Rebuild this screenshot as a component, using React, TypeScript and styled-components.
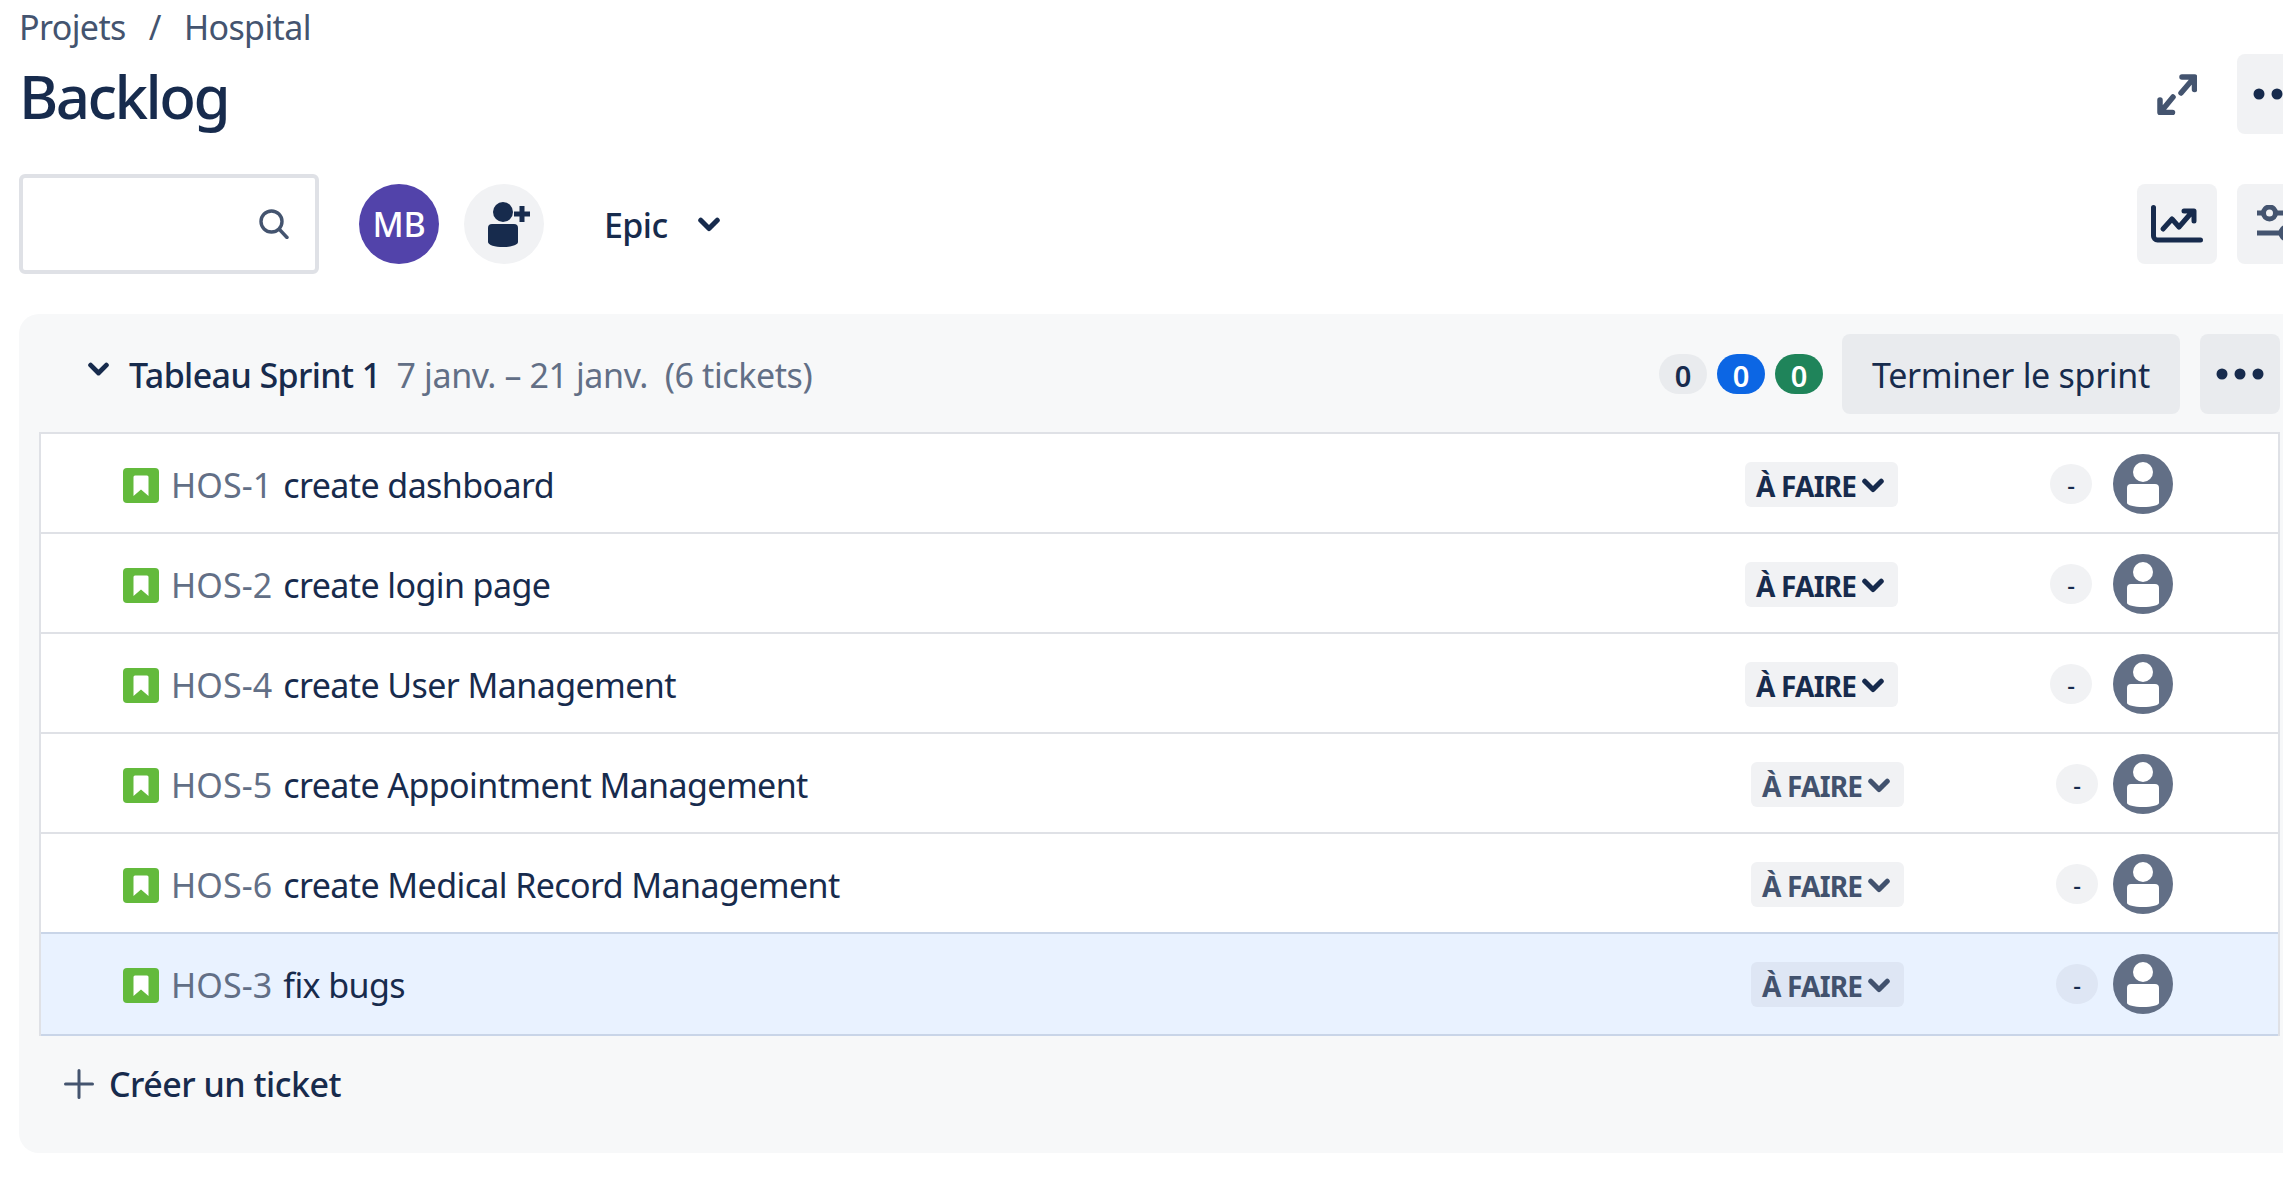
import React from 'react';
import styled, { createGlobalStyle } from 'styled-components';

const GlobalStyle = createGlobalStyle`
  html, body {
    margin: 0;
    padding: 0;
    background: #fff;
    overflow: hidden;
  }
  * { box-sizing: border-box; }
`;

const Page = styled.div`
  width: 2283px;
  height: 1198px;
  overflow: hidden;
  padding-left: 19px;
  font-family: 'Noto Sans', 'Open Sans', sans-serif;
  color: #172b4d;
`;

const Inner = styled.div`
  width: 2298px;
`;

const Header = styled.header`
  display: flex;
  justify-content: space-between;
  align-items: flex-end;
  padding-top: 7px;
`;

const Breadcrumb = styled.nav`
  display: flex;
  height: 40px;
  line-height: 40px;
  font-size: 34px;
  letter-spacing: -0.6px;
  color: #44546f;
  margin-bottom: 7px;
`;

const Slash = styled.span`
  margin: 0 23px;
`;

const Title = styled.h1`
  margin: 0;
  height: 80px;
  line-height: 84px;
  font-size: 60px;
  font-weight: 500;
  letter-spacing: -2.5px;
`;

const Actions = styled.div<{ $gap?: number }>`
  display: flex;
  align-items: center;
  gap: ${({ $gap }) => $gap ?? 20}px;
`;

const GhostIcon = styled.div`
  width: 60px;
  height: 80px;
  display: flex;
  align-items: center;
  justify-content: center;
`;

const IconButton = styled.button`
  width: 80px;
  height: 80px;
  padding: 0;
  border: none;
  border-radius: 8px;
  background: ${({ $bg }: { $bg?: string }) => $bg || '#f1f2f4'};
  display: flex;
  align-items: center;
  justify-content: center;
  flex-shrink: 0;
`;

const Toolbar = styled.div`
  display: flex;
  align-items: center;
  height: 100px;
  margin-top: 40px;
`;

const SearchBox = styled.div`
  width: 300px;
  height: 100px;
  border: 4px solid #dfe1e6;
  border-radius: 6px;
  display: flex;
  align-items: center;
  justify-content: flex-end;
  padding-right: 26px;
`;

const UserAvatar = styled.div`
  width: 80px;
  height: 80px;
  border-radius: 50%;
  background: #5243aa;
  color: #fff;
  font-size: 34px;
  font-weight: 500;
  letter-spacing: -0.3px;
  display: flex;
  align-items: center;
  justify-content: center;
  margin-left: 40px;
`;

const AddUser = styled.div`
  width: 80px;
  height: 80px;
  border-radius: 50%;
  background: #f1f2f4;
  margin-left: 25px;
`;

const EpicFilter = styled.div`
  display: flex;
  align-items: center;
  gap: 30px;
  margin-left: 60px;
  padding-top: 2px;
  font-size: 34px;
  font-weight: 500;
  letter-spacing: -0.6px;
`;

const ToolbarEnd = styled(Actions)`
  margin-left: auto;
`;

const FilterIcon = styled.svg`
  width: 46px;
  height: 38px;
  margin-left: 6px;
  flex-shrink: 0;
`;

const Panel = styled.section`
  margin-top: 40px;
  height: 839px;
  background: #f7f8f9;
  border-radius: 20px;
  padding: 0 37px 0 20px;
`;

const SprintHeader = styled.div`
  display: flex;
  align-items: center;
  height: 118px;
  padding: 2px 0 0 49px;
`;

const SprintChevron = styled.span`
  display: flex;
  margin-top: -10px;
  margin-right: 20px;
`;

const SprintTitle = styled.span`
  padding-top: 2px;
  font-size: 34px;
  font-weight: 500;
  letter-spacing: -0.6px;
`;

const SprintMeta = styled.span`
  padding-top: 2px;
  font-size: 34px;
  color: #626f86;
  letter-spacing: -0.4px;
  margin-left: 16px;
  white-space: pre;
`;

const SprintActions = styled.div`
  display: flex;
  align-items: center;
  margin-left: auto;
`;

const Counter = styled.span<{ $bg: string; $fg: string; $gap: number }>`
  width: 48px;
  height: 40px;
  padding-top: 2px;
  border-radius: 20px;
  background: ${({ $bg }) => $bg};
  color: ${({ $fg }) => $fg};
  font-size: 29px;
  font-weight: 600;
  display: flex;
  align-items: center;
  justify-content: center;
  margin-right: ${({ $gap }) => $gap}px;
`;

const EndSprint = styled.button`
  width: 338px;
  height: 80px;
  padding: 2px 0 0;
  border: none;
  border-radius: 8px;
  background: #e9ebee;
  color: #172b4d;
  font-family: inherit;
  font-size: 34px;
  letter-spacing: -0.3px;
  margin-right: 20px;
`;

const Table = styled.div`
  border-top: 2px solid #dfe1e6;
  border-left: 2px solid #dfe1e6;
  border-right: 2px solid #dfe1e6;
`;

const Row = styled.div<{ $selected?: boolean; $beforeSelected?: boolean }>`
  display: flex;
  align-items: center;
  height: ${({ $selected }) => ($selected ? 102 : 100)}px;
  padding: ${({ $selected }) => ($selected ? '0' : '2px')} 105px 0 82px;
  background: ${({ $selected }) => ($selected ? '#e9f2ff' : '#fff')};
  border-bottom: 2px solid
    ${({ $selected, $beforeSelected }) => ($selected || $beforeSelected ? '#c9d5e8' : '#dfe1e6')};
`;

const StoryIcon = styled.svg`
  width: 36px;
  height: 35px;
  flex-shrink: 0;
  margin: 3px 12px 0 0;
`;

const IssueKey = styled.span`
  padding-top: 2px;
  font-size: 34px;
  color: #626f86;
  letter-spacing: 0.1px;
  margin-right: 11px;
`;

const Summary = styled.span`
  padding-top: 2px;
  font-size: 34px;
  letter-spacing: -0.6px;
`;

const StatusPill = styled.div<{ $selected?: boolean; $dark?: boolean }>`
  display: flex;
  align-items: center;
  height: 45px;
  width: 153px;
  padding: 3px 0 0 11px;
  margin-left: auto;
  border-radius: 6px;
  background: ${({ $selected }) => ($selected ? '#dee6f4' : '#f1f2f4')};
  color: ${({ $dark }) => ($dark ? '#172b4d' : '#42526e')};
  font-size: 28px;
  font-weight: 700;
  letter-spacing: -0.8px;
  gap: 6px;
`;

const Estimate = styled.div<{ $selected?: boolean }>`
  width: 42px;
  height: 40px;
  border-radius: 50%;
  background: ${({ $selected }) => ($selected ? '#dee6f4' : '#f1f2f4')};
  margin-left: 152px;
  font-size: 24px;
  font-weight: 500;
  display: flex;
  align-items: center;
  justify-content: center;
`;

const Assignee = styled.svg<{ $gap: number }>`
  width: 60px;
  height: 60px;
  flex-shrink: 0;
  margin-left: ${({ $gap }) => $gap}px;
`;

const CreateRow = styled.div`
  display: flex;
  align-items: center;
  gap: 15px;
  height: 96px;
  padding: 0 0 0 25px;
  font-size: 34px;
  font-weight: 500;
  letter-spacing: -0.5px;
`;

const Chevron = ({ color = '#172b4d', size = 22 }: { color?: string; size?: number }) => (
  <svg width={size} height={size * 0.7} viewBox="0 0 20 14" fill="none">
    <path d="M2.5 3 10 10.5 17.5 3" stroke={color} strokeWidth="4.6" strokeLinecap="round" strokeLinejoin="round" />
  </svg>
);

const Dots = () => (
  <svg width="48" height="12" viewBox="0 0 48 12" fill="#172b4d">
    <circle cx="6" cy="6" r="5.5" />
    <circle cx="24" cy="6" r="5.5" />
    <circle cx="42" cy="6" r="5.5" />
  </svg>
);

const tickets = [
  { key: 'HOS-1', summary: 'create dashboard', dark: true },
  { key: 'HOS-2', summary: 'create login page', dark: true },
  { key: 'HOS-4', summary: 'create User Management', dark: true },
  { key: 'HOS-5', summary: 'create Appointment Management' },
  { key: 'HOS-6', summary: 'create Medical Record Management', beforeSelected: true },
  { key: 'HOS-3', summary: 'fix bugs', selected: true }
];

const App: React.FC = () => (
  <Page>
    <GlobalStyle />
    <Inner>
      <Header>
        <div>
          <Breadcrumb>
            <span>Projets</span>
            <Slash>/</Slash>
            <span>Hospital</span>
          </Breadcrumb>
          <Title>Backlog</Title>
        </div>
        <Actions $gap={30}>
          <GhostIcon>
            <svg width="40" height="41" viewBox="0 0 40 41" fill="none" stroke="#44546f" strokeWidth="5.5" strokeLinecap="round" strokeLinejoin="round">
              <path d="M25 3h12.5v12.5M36 5 24 19M3 26v12.5h12.5M4.5 37 16 23" />
            </svg>
          </GhostIcon>
          <IconButton>
            <Dots />
          </IconButton>
        </Actions>
      </Header>

      <Toolbar>
        <SearchBox>
          <svg width="30" height="30" viewBox="0 0 30 30" fill="none" stroke="#44546f" strokeWidth="3.4" strokeLinecap="round">
            <circle cx="12.5" cy="12.5" r="10.5" />
            <path d="M20.5 20.5 28 28.5" />
          </svg>
        </SearchBox>
        <UserAvatar>MB</UserAvatar>
        <AddUser>
          <svg width="80" height="80" viewBox="0 0 80 80" fill="#172b4d">
            <ellipse cx="39" cy="28" rx="10" ry="10" />
            <path d="M24 44a4 4 0 0 1 4-4h22a4 4 0 0 1 4 4v14c0 3-7 5-15 5s-15-2-15-5z" />
            <path d="M55.5 22h5v5.5h5.5v5h-5.5v5.5h-5v-5.5h-5.5v-5h5.500z" />
          </svg>
        </AddUser>
        <EpicFilter>
          Epic
          <Chevron />
        </EpicFilter>
        <ToolbarEnd>
          <IconButton>
            <svg width="52" height="38" viewBox="0 0 52 38" fill="none" stroke="#172b4d" strokeLinecap="round" strokeLinejoin="round">
              <path d="M2.5 2.5v28.5a4 4 0 0 0 4 4h43" strokeWidth="5" />
              <path d="M12 24l9-10 7 8 13-15M33 6h10v10" strokeWidth="5" />
            </svg>
          </IconButton>
          <IconButton>
            <FilterIcon viewBox="0 0 46 38" fill="none" stroke="#44546f" strokeWidth="5">
              <path d="M0 8h5M20 8h26M0 28h22M38 28h8" />
              <circle cx="12.5" cy="8" r="6" />
              <circle cx="30" cy="28" r="6" />
            </FilterIcon>
          </IconButton>
        </ToolbarEnd>
      </Toolbar>

      <Panel>
        <SprintHeader>
          <SprintChevron>
            <Chevron size={21} />
          </SprintChevron>
          <SprintTitle>Tableau Sprint 1</SprintTitle>
          <SprintMeta>7 janv. – 21 janv.  (6 tickets)</SprintMeta>
          <SprintActions>
            <Counter $bg="#e9ebee" $fg="#172b4d" $gap={10}>0</Counter>
            <Counter $bg="#0c66e4" $fg="#fff" $gap={10}>0</Counter>
            <Counter $bg="#1f845a" $fg="#fff" $gap={19}>0</Counter>
            <EndSprint>Terminer le sprint</EndSprint>
            <IconButton $bg="#e9ebee">
              <Dots />
            </IconButton>
          </SprintActions>
        </SprintHeader>

        <Table>
          {tickets.map((t) => (
            <Row key={t.key} $selected={t.selected} $beforeSelected={t.beforeSelected}>
              <StoryIcon viewBox="0 0 36 35">
                <rect width="36" height="35" rx="4" fill="#63ba3c" />
                <path d="M10.5 9a1.5 1.5 0 0 1 1.5-1.5h12a1.5 1.5 0 0 1 1.5 1.5v19L18 21.5 10.5 28z" fill="#fff" />
              </StoryIcon>
              <IssueKey>{t.key}</IssueKey>
              <Summary>{t.summary}</Summary>
              <StatusPill $selected={t.selected} $dark={t.dark}>
                À FAIRE
                <Chevron color={t.dark ? '#172b4d' : '#42526e'} />
              </StatusPill>
              <Estimate $selected={t.selected}>-</Estimate>
              <Assignee $gap={t.dark ? 21 : 15} viewBox="0 0 60 60">
                <circle cx="30" cy="30" r="30" fill="#626f86" />
                <circle cx="30" cy="18" r="10" fill="#fff" />
                <path d="M14 34a4 4 0 0 1 4-4h24a4 4 0 0 1 4 4v15c0 2-7 4-16 4s-16-2-16-4z" fill="#fff" />
              </Assignee>
            </Row>
          ))}
        </Table>

        <CreateRow>
          <svg width="30" height="30" viewBox="0 0 30 30" stroke="#44546f" strokeWidth="3" strokeLinecap="round">
            <path d="M15 1.5v27M1.5 15h27" />
          </svg>
          Créer un ticket
        </CreateRow>
      </Panel>
    </Inner>
  </Page>
);

export default App;
